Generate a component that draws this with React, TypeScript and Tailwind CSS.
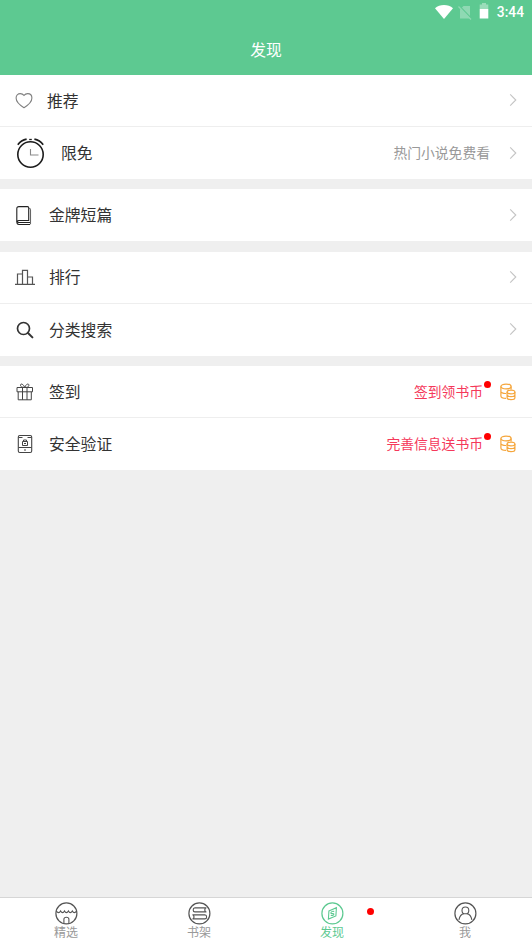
import type { ReactNode } from "react";

type RowProps = {
  icon: ReactNode;
  title: string;
  indent?: string;
  note?: string;
  reward?: string;
};

const HeartIcon = () => (
  <svg width="18" height="18" viewBox="0 0 18 18" fill="none" stroke="#808080" strokeWidth="1.1">
    <path d="M9 3.3C7.9 2 6.8 1.6 5.3 1.6 2.8 1.6 1.1 3.5 1.1 6c0 4.3 4.5 7.6 7.9 9.7 3.4-2.1 7.9-5.4 7.9-9.7 0-2.5-1.7-4.4-4.2-4.4-1.5 0-2.6.4-3.7 1.7Z" />
  </svg>
);

const ClockIcon = () => (
  <svg width="32" height="32" viewBox="0 0 32 32" fill="none" stroke="#1c1c1c">
    <circle cx="15.5" cy="17.5" r="12.7" strokeWidth="1.6" />
    <path d="M2.8 7.7C5 4.9 8 3 11.6 2.2M28.2 7.7C26 4.9 23 3 19.4 2.2" strokeWidth="1.7" />
    <path d="M14.2 2.5h2.6" strokeWidth="1.3" />
    <path d="M15.5 12v6h8" stroke="#8a8a8a" strokeWidth="1.1" />
  </svg>
);

const BookIcon = () => (
  <svg className="mt-px ml-px" width="18" height="20" viewBox="0 0 18 20" fill="none" stroke="#222" strokeWidth="1.1">
    <path d="M3 .6h8.5c.8 0 1.200.4 1.200 1.200v12.700H3c-2.400 0-2.400 2 0 2h11" />
    <path d="M.8 15.500V2.800C.8 1.300 1.500.6 3 .6M.8 15.500c0 2 .8 3 2.200 3h11" />
    <path d="M12.700 2.200c1.200 0 1.800.6 1.800 1.700v14.300" stroke="#666" />
  </svg>
);

const RankIcon = () => (
  <svg width="20" height="17" viewBox="0 0 20 17" fill="none" stroke="#555" strokeWidth="1.2">
    <path d="M2.500 15V5h5M7.500 15V1.300h5V15M12.500 8h5v7M0 15.300h20" />
  </svg>
);

const SearchIcon = () => (
  <svg className="ml-px" width="18" height="18" viewBox="0 0 18 18" fill="none" stroke="#333">
    <circle cx="7.5" cy="7.5" r="6" strokeWidth="1.7" />
    <path d="m12 12 4.400 4.400" strokeWidth="2" strokeLinecap="round" />
  </svg>
);

const GiftIcon = () => (
  <svg className="ml-px" width="18" height="18" viewBox="0 0 18 18" fill="none" stroke="#444" strokeWidth="1">
    <path d="M1 4.500h15.500v4.300H1zM2.200 8.800v8h13.100v-8M6.500 4.500v12.300M11 4.500v12.300" />
    <path d="M8.700 4.500C7.300.5 4.300.2 4.500 2.400c.1 1.300 1.500 2.100 4.200 2.100ZM8.700 4.500c1.400-4 4.400-4.300 4.200-2.100-.1 1.300-1.500 2.100-4.200 2.100Z" />
  </svg>
);

const VerifyIcon = () => (
  <svg className="ml-[2px]" width="16" height="20" viewBox="0 0 16 20" fill="none" stroke="#444">
    <rect x="1.3" y="1.5" width="13.4" height="17" rx="1.5" strokeWidth="1.1" />
    <path d="M1.500 3.500h4M10.500 3.500h4M1.500 13.500h13M7 16h2" strokeWidth="1" />
    <path d="M5.500 7.500h5v4h-5zM6.500 7.500v-1.500h3v1.500M7 9.500h2" strokeWidth="1" />
  </svg>
);

const CoinsIcon = () => (
  <svg width="16" height="18" viewBox="0 0 16 18" fill="none" stroke="#f5a63c" strokeWidth="1.2">
    <ellipse cx="6" cy="3.5" rx="5.1" ry="2.4" />
    <path d="M.9 3.500v9.400c0 1.300 2 2.300 5.100 2.400M11.100 3.500v3M.9 8.200c0 1.400 2 2.400 5.300 2.300" />
    <ellipse cx="11" cy="9" rx="3.9" ry="1.9" />
    <path d="M7.100 9v5.700c0 1.100 1.700 1.900 3.900 1.900s3.900-.8 3.900-1.900V9M7.100 11.800c0 1.100 1.700 1.900 3.900 1.900s3.900-.8 3.900-1.900" />
  </svg>
);

const Chevron = () => (
  <svg className="mb-px" width="8" height="14" viewBox="0 0 8 14" fill="none" stroke="#c4c4c4" strokeWidth="1.1">
    <path d="m1.200 1.300 5.600 5.700-5.600 5.700" />
  </svg>
);

const Row = ({ icon, title, indent = "w-[49px]", note, reward }: RowProps) => (
  <div className="flex h-[52px] items-center border-b border-[#eeeeee] pr-[15px] last:border-b-0">
    <div className={`${indent} flex shrink-0 pl-[15px]`}>{icon}</div>
    <p className="text-[15.8px] leading-4 text-[#333333]">{title}</p>
    <div className="ml-auto flex items-center">
      {note && <p className="mr-[19px] text-[13.8px] leading-none text-[#999999]">{note}</p>}
      {reward ? (
        <>
          <p className="relative mr-[17px] text-[13.8px] leading-none text-[#f5385a]">
            {reward}
            <span className="absolute -top-[4px] -right-[8px] size-[7px] rounded-full bg-[#ff0000]" />
          </p>
          <div className="mr-px">
            <CoinsIcon />
          </div>
        </>
      ) : (
        <Chevron />
      )}
    </div>
  </div>
);

const Tab = ({ label, active, dot, children }: { label: string; active?: boolean; dot?: boolean; children: ReactNode }) => (
  <div className={`relative flex flex-1 flex-col items-center pt-[3px] ${active ? "text-[#5dc991]" : "text-[#555555]"}`}>
    <svg className="mr-px" width="24" height="24" viewBox="-0.4 -0.4 24 24" fill="none" stroke="currentColor" strokeWidth="1.1">
      <circle cx="12" cy="12" r="10.5" strokeWidth="1.2" />
      {children}
    </svg>
    <p className={`mr-px text-[12px] leading-[14px] ${active ? "text-[#5dc991]" : "text-[#999999]"}`}>{label}</p>
    {dot && <span className="absolute top-[10px] left-[101px] size-[7px] rounded-full bg-[#ff0000]" />}
  </div>
);

const StatusBar = () => (
  <div className="flex h-6 items-center justify-end pr-2 text-white">
    <svg className="mb-px" width="18" height="14" viewBox="0 0 18 14" fill="currentColor">
      <path d="M9 14 0 3.200C2.500 1.100 5.500 0 9 0s6.500 1.100 9 3.200Z" />
    </svg>
    <svg className="ml-[5px]" width="14" height="15" viewBox="0 0 14 15">
      <path d="M5.500 1H12v12.500H2V4.500Z" fill="#8fd9b3" />
      <path d="m1.500 1 12 12.500" stroke="#5dc991" strokeWidth="1.2" />
      <path d="m.5 1.500 12.500 13" stroke="#8fd9b3" strokeWidth="1.2" />
    </svg>
    <svg className="mb-[2px] ml-[7px]" width="10" height="16" viewBox="0 0 10 16">
      <path d="M3 0h4v1.500h2.300V6H.7V1.500H3Z" fill="#9addba" />
      <path d="M.7 6h8.600v9.500H.7z" fill="currentColor" />
    </svg>
    <span className="mt-px ml-[8px] font-[Roboto] text-[13.8px] leading-none font-medium">3:44</span>
  </div>
);

const App = () => {
  return (
    <div className="flex h-screen flex-col bg-[#efefef] font-['Noto_Sans_CJK_SC',sans-serif]">
      <header className="h-[75px] shrink-0 bg-[#5dc991]">
        <StatusBar />
        <h1 className="pt-[18px] text-center text-[15.8px] leading-4 text-white">发现</h1>
      </header>

      <main className="flex-1">
        <section className="bg-white">
          <Row icon={<HeartIcon />} title="推荐" indent="w-[47px]" />
          <Row icon={<ClockIcon />} title="限免" indent="w-[61px]" note="热门小说免费看" />
        </section>
        <section className="mt-[10px] bg-white">
          <Row icon={<BookIcon />} title="金牌短篇" />
        </section>
        <section className="mt-[10.5px] bg-white">
          <Row icon={<RankIcon />} title="排行" />
          <Row icon={<SearchIcon />} title="分类搜索" />
        </section>
        <section className="mt-[10.5px] bg-white">
          <Row icon={<GiftIcon />} title="签到" reward="签到领书币" />
          <Row icon={<VerifyIcon />} title="安全验证" reward="完善信息送书币" />
        </section>
      </main>

      <nav className="flex h-[50px] shrink-0 border-t border-[#d6d6d6] bg-white">
        <Tab label="精选">
          <path d="M2 9.500c1.300 2.300 3 2.300 4.200 0 1.300 2.300 2.700 2.300 3.900 0 1.200 2.300 2.600 2.300 3.900 0 1.200 2.300 2.600 2.300 3.900 0 1.200 2.300 2.900 2.300 4.100 0M9.500 22v-4.200c0-2.600 5-2.600 5 0V22" />
        </Tab>
        <Tab label="书架">
          <path d="M19 6.500H7.500c-2.300 0-2.300 4 0 4H19M18 6.500c-.8 1.300-.8 2.700 0 4M5 13.500h12.500c2.300 0 2.300 4 0 4H5M6 13.500c.8 1.300.8 2.700 0 4" />
        </Tab>
        <Tab label="发现" active dot>
          <path d="m8.500 9.500 7.500-3.200-.5 8.200L8 17.700ZM13.800 10.200c-1.800-.8-3.500.3-3.300 1.600.2 1 2.600-.2 2.900.8.200 1.200-1.600 1.900-3 1.200" />
        </Tab>
        <Tab label="我">
          <circle cx="12" cy="9" r="3.4" />
          <path d="M5.500 18.500c.8-4 2.700-5.900 5-6.300M18.500 18.500c-.8-4-2.700-5.900-5-6.300" />
        </Tab>
      </nav>
    </div>
  );
};

export default App;
